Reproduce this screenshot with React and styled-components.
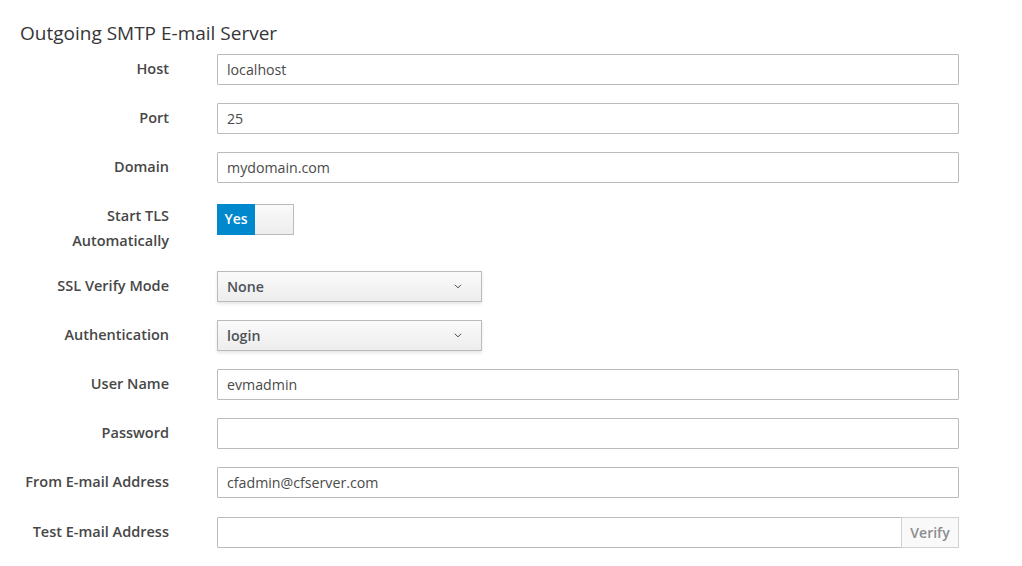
import React from 'react'
import styled, { createGlobalStyle } from 'styled-components'

const GlobalStyle = createGlobalStyle`
    html, body {
        margin: 0;
        padding: 0;
        background: #fff;
        font-family: "Open Sans", "Noto Sans", sans-serif;
        color: #363636;
    }
`

const Page = styled.div`
    padding: 23px 63px 20px 20px;
`

const Title = styled.h3`
    margin: 0 0 11px 0;
    font-size: 19px;
    line-height: 20px;
    font-weight: 400;
    color: #363636;
`

const Form = styled.div`
    display: grid;
    grid-template-columns: 149px 1fr;
    column-gap: 48px;
    row-gap: 18px;
`

const Label = styled.label`
    text-align: right;
    font-size: 14.5px;
    font-weight: 600;
    line-height: 24.5px;
    padding-top: 3px;
    color: #474747;
`

const Field = styled.div`
    display: flex;
    align-items: flex-start;
`

const Input = styled.input`
    box-sizing: border-box;
    width: 100%;
    height: 31px;
    border: 1px solid #bbb;
    border-radius: 1px;
    padding: 0 9px;
    font-family: inherit;
    font-size: 14.2px;
    color: #4a4a4a;
    outline: none;
    background: #fff;
`

const Toggle = styled.div`
    display: flex;
    margin-top: 3px;
    width: 77px;
    height: 31px;
    box-sizing: border-box;
    border: 1px solid #bbb;
    background: linear-gradient(#fafafa, #ededed);
`

const ToggleOn = styled.div`
    width: 38px;
    margin: -1px 0 -1px -1px;
    padding-bottom: 2px;
    box-sizing: border-box;
    background: #0088ce;
    color: #fff;
    font-size: 14px;
    font-weight: 600;
    display: flex;
    align-items: center;
    justify-content: center;
`

const Select = styled.div`
    box-sizing: border-box;
    width: 265px;
    height: 31px;
    border: 1px solid #bbb;
    background: linear-gradient(#fafafa, #ededed);
    box-shadow: 0 2px 3px rgba(3, 3, 3, 0.1);
    display: flex;
    align-items: center;
    justify-content: space-between;
    padding: 0 19px 0 9px;
    font-size: 14.2px;
    font-weight: 600;
    color: #4d5258;
`

const AddonButton = styled.button`
    box-sizing: border-box;
    height: 31px;
    width: 58px;
    flex-shrink: 0;
    margin-left: -1px;
    border: 1px solid #d1d1d1;
    background: #f9f9f9;
    color: #8b8d8f;
    font-family: inherit;
    font-size: 14px;
    font-weight: 600;
    padding: 0;
`

const LastRow = styled.div`
    display: contents;
    & > * {
        margin-top: 1px;
    }
`

function Chevron() {
    return (
        <svg width="8" height="5" viewBox="0 0 8 5">
            <path d="M0.8 0.8 L4 3.8 L7.2 0.8" fill="none" stroke="#4d5258" strokeWidth="1" />
        </svg>
    )
}

const textRows = [
    ['Host', 'localhost'],
    ['Port', '25'],
    ['Domain', 'mydomain.com'],
]

const userRows = [
    ['User Name', 'evmadmin'],
    ['Password', ''],
    ['From E-mail Address', 'cfadmin@cfserver.com'],
]

function App() {
    return (
        <Page>
            <GlobalStyle />
            <Title>Outgoing SMTP E-mail Server</Title>
            <Form>
                {textRows.map(([label, value]) => (
                    <React.Fragment key={label}>
                        <Label>{label}</Label>
                        <Field><Input defaultValue={value} /></Field>
                    </React.Fragment>
                ))}
                <Label>Start TLS<br />Automatically</Label>
                <Field>
                    <Toggle><ToggleOn>Yes</ToggleOn></Toggle>
                </Field>
                <Label>SSL Verify Mode</Label>
                <Field><Select>None<Chevron /></Select></Field>
                <Label>Authentication</Label>
                <Field><Select>login<Chevron /></Select></Field>
                {userRows.map(([label, value]) => (
                    <React.Fragment key={label}>
                        <Label>{label}</Label>
                        <Field><Input defaultValue={value} type={label === 'Password' ? 'password' : 'text'} /></Field>
                    </React.Fragment>
                ))}
                <LastRow>
                    <Label>Test E-mail Address</Label>
                    <Field>
                        <Input />
                        <AddonButton>Verify</AddonButton>
                    </Field>
                </LastRow>
            </Form>
        </Page>
    )
}

export default App
